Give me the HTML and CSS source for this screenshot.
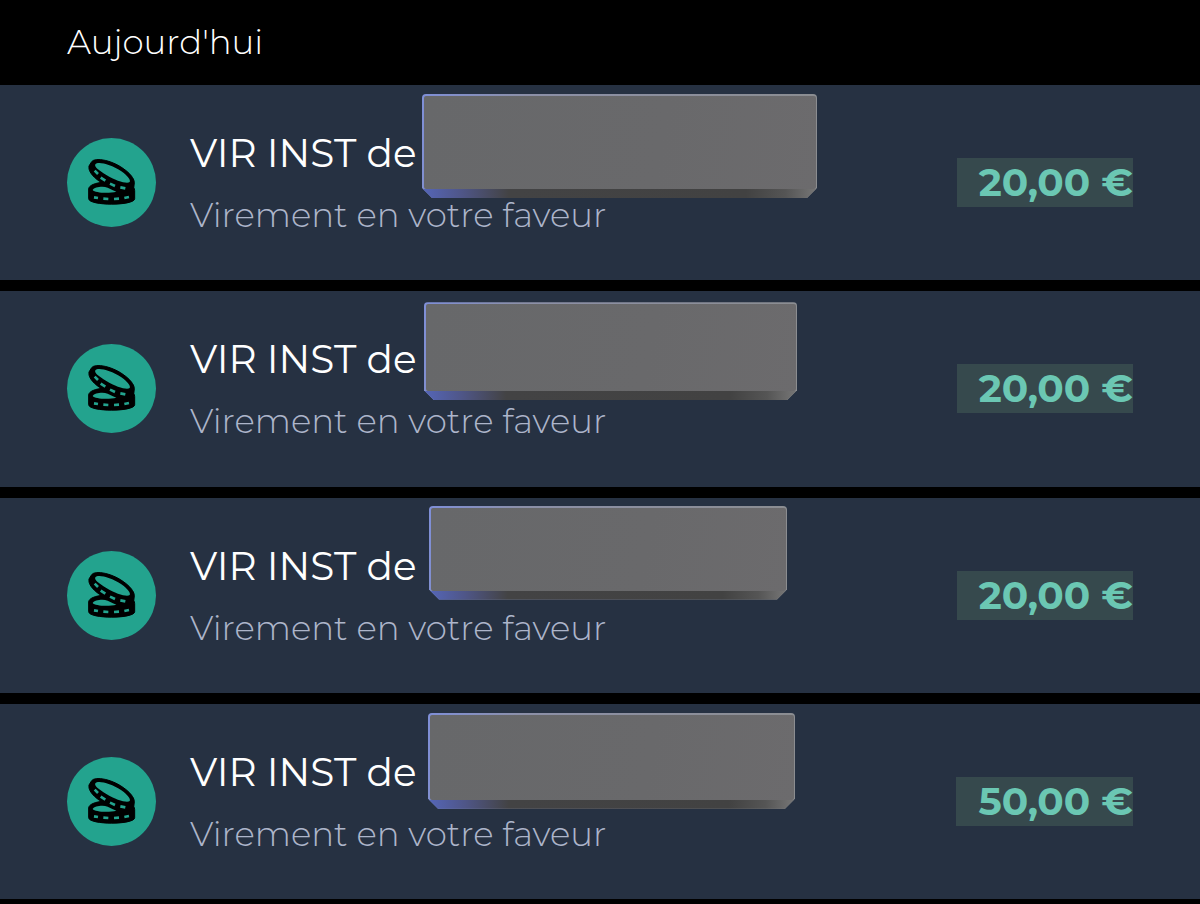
FILE: index.html
```html
<!doctype html>
<html lang="fr">
  <head>
    <meta charset="utf-8" />
    <title>Opérations</title>
    <meta name="viewport" content="width=device-width" />
    <link rel="stylesheet" href="styles.css">
  </head>

  <body>
    <svg class="sprite" aria-hidden="true">
      <symbol id="coins" viewBox="0 0 267 267">
        <!-- bottom coin -->
        <path class="coin" d="M65 153 C65 142 86 134 114 132 L199 148 Q203 152 203 158 V182 C203 204 65 204 65 182 Z" />
        <path class="face" d="M77 156 C82 147 108 144 122 149 Q136 156 148 161 C126 167 84 165 77 156 Z" />
        <path class="dash" d="M81 178 L93 180 M109 182 L124 183 M141 183 L156 182 M172 180 L186 177" />
        <!-- tilted coin -->
        <path class="coin" d="M66 84 L74 71 C85 57 138 66 176 97 C196 113 202 126 202 134 L200 152 C194 168 160 164 128 148 C92 130 62 106 66 84 Z" />
        <path class="face" d="M85 79 C93 69 132 80 162 99 C183 114 192 126 188 132 C181 139 148 129 118 111 C94 97 81 86 85 79 Z" />
        <path class="dash" d="M83 98 L93 108 M101 119 L115 128 M129 137 L144 144 M160 148 L175 151" />
      </symbol>
    </svg>

    <h1 class="day">Aujourd'hui</h1>

    <ul class="operations">
      <li class="operation">
        <span class="icon"><svg><use href="#coins" /></svg></span>
        <div class="text">
          <p class="title">VIR INST de</p>
          <p class="kind">Virement en votre faveur</p>
        </div>
        <span class="amount">20,00 €</span>
        <span class="block block-1"></span>
      </li>
      <li class="operation">
        <span class="icon"><svg><use href="#coins" /></svg></span>
        <div class="text">
          <p class="title">VIR INST de</p>
          <p class="kind">Virement en votre faveur</p>
        </div>
        <span class="amount">20,00 €</span>
        <span class="block block-2"></span>
      </li>
      <li class="operation">
        <span class="icon"><svg><use href="#coins" /></svg></span>
        <div class="text">
          <p class="title">VIR INST de</p>
          <p class="kind">Virement en votre faveur</p>
        </div>
        <span class="amount">20,00 €</span>
        <span class="block block-3"></span>
      </li>
      <li class="operation">
        <span class="icon"><svg><use href="#coins" /></svg></span>
        <div class="text">
          <p class="title">VIR INST de</p>
          <p class="kind">Virement en votre faveur</p>
        </div>
        <span class="amount">50,00 €</span>
        <span class="block block-4"></span>
      </li>
    </ul>
  </body>
</html>
```
FILE: styles.css
```css
* {
  box-sizing: border-box;
}
body {
  display: flex;
  flex-direction: column;
  min-height: 100vh;
  margin: 0;
  padding-bottom: 5px;
  background-color: #000;
  color: #fff;
  font-family: Montserrat, Inter, sans-serif;
}
.sprite {
  display: none;
}
.day {
  margin: 0;
  padding: 20px 67px 21px;
  font-size: 34px;
  font-weight: 300;
  line-height: 44px;
  color: #fff;
}
.operations {
  flex: 1;
  display: flex;
  flex-direction: column;
  gap: 11px;
  margin: 0;
  padding: 0;
  list-style: none;
}
.operation {
  position: relative;
  flex: 1;
  display: flex;
  align-items: center;
  gap: 34px;
  padding: 0 67px;
  background-color: #263142;
}
.icon {
  flex: none;
  width: 89px;
  height: 89px;
  border-radius: 50%;
  background-color: #23a38e;
}
.icon svg {
  display: block;
  width: 89px;
  height: 89px;
}
.coin {
  stroke: #000;
  stroke-width: 3;
}
.face {
  fill: #23a38e;
}
.dash {
  fill: none;
  stroke: #23a38e;
  stroke-width: 8;
}
.text {
  flex: 1;
  padding-top: 3px;
}
.title,
.kind {
  margin: 0;
}
.title {
  font-size: 39px;
  font-weight: 400;
  line-height: 62px;
}
.kind {
  font-size: 34px;
  font-weight: 300;
  line-height: 62px;
  color: #adb5ca;
}
.amount {
  padding-left: 22px;
  background-color: #36494d;
  color: #6bc7b3;
  font-size: 39px;
  font-weight: 700;
  line-height: 49px;
}

/* grey slab laid over the name */
.block {
  position: absolute;
  background: linear-gradient(100deg, #7f8fd8, #8c90a8 25%, #8b8d90);
  border-radius: 4px;
  clip-path: polygon(0 0, 100% 0, 100% calc(100% - 10px), calc(100% - 10px) 100%, 10px 100%, 0 calc(100% - 10px));
}
.block::before {
  content: "";
  position: absolute;
  inset: 2px 1px 9px 2px;
  border-radius: 2px;
  background: linear-gradient(100deg, #67686a, #69696b 60%, #6c6b6d);
}
.block::after {
  content: "";
  position: absolute;
  inset: auto 0 0;
  height: 9px;
  background: linear-gradient(90deg, #5566b8, #4f5688 10%, #434344 22%, #424242 82%, #555 92%, #777);
}
.block-1 {
  left: 422px;
  top: 9px;
  width: 395px;
  height: 104px;
}
.block-2 {
  left: 424px;
  top: 11px;
  width: 373px;
  height: 98px;
}
.block-3 {
  left: 429px;
  top: 8px;
  width: 358px;
  height: 94px;
}
.block-4 {
  left: 428px;
  top: 9px;
  width: 367px;
  height: 96px;
}
```
